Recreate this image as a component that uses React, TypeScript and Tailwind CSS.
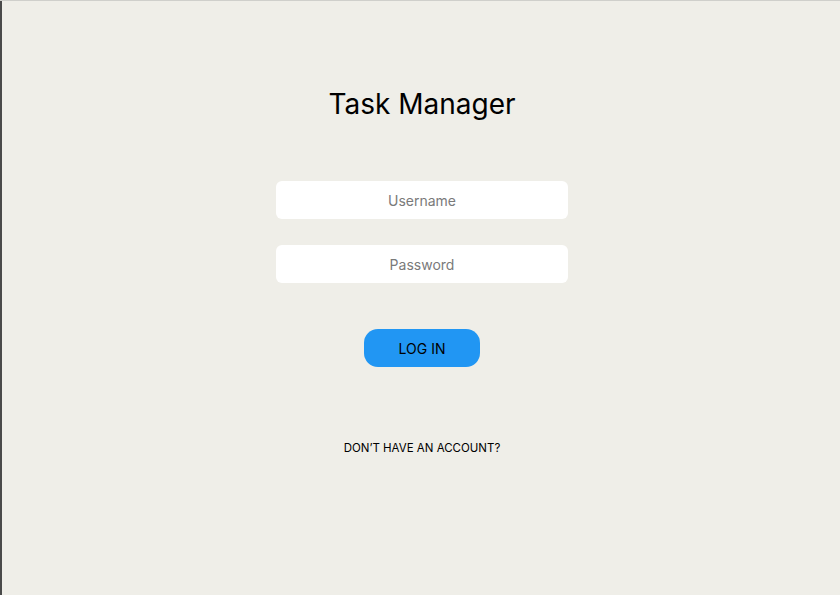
export default function App() {
  return (
    <div className="w-[840px] h-[595px] flex bg-[#efeee8] border-t border-[#cfcfcb] font-['Inter',sans-serif]">
      <div className="w-[2px] bg-[#4a4a4a]" />
      <div className="flex-1 flex flex-col items-center pl-[2px]">
        <h1 className="mt-[86px] text-[28px] leading-[34px] text-black">Task Manager</h1>

        <div className="mt-[60px] flex flex-col gap-[26px]">
          <input
            placeholder="Username"
            className="w-[292px] h-[38px] rounded-[6px] bg-white text-center text-[14px] text-[#777] placeholder:text-[#7a7a7a] outline-none"
          />
          <input
            type="password"
            placeholder="Password"
            className="w-[292px] h-[38px] rounded-[6px] bg-white text-center text-[14px] text-[#777] placeholder:text-[#7a7a7a] outline-none"
          />
        </div>

        <button className="mt-[46px] w-[116px] h-[38px] rounded-[14px] bg-[#2196f3] text-[14px] text-black">
          LOG IN
        </button>

        <p className="mt-[73px] text-[11.5px] leading-[16px] text-black">DON’T HAVE AN ACCOUNT?</p>
      </div>
    </div>
  );
}
